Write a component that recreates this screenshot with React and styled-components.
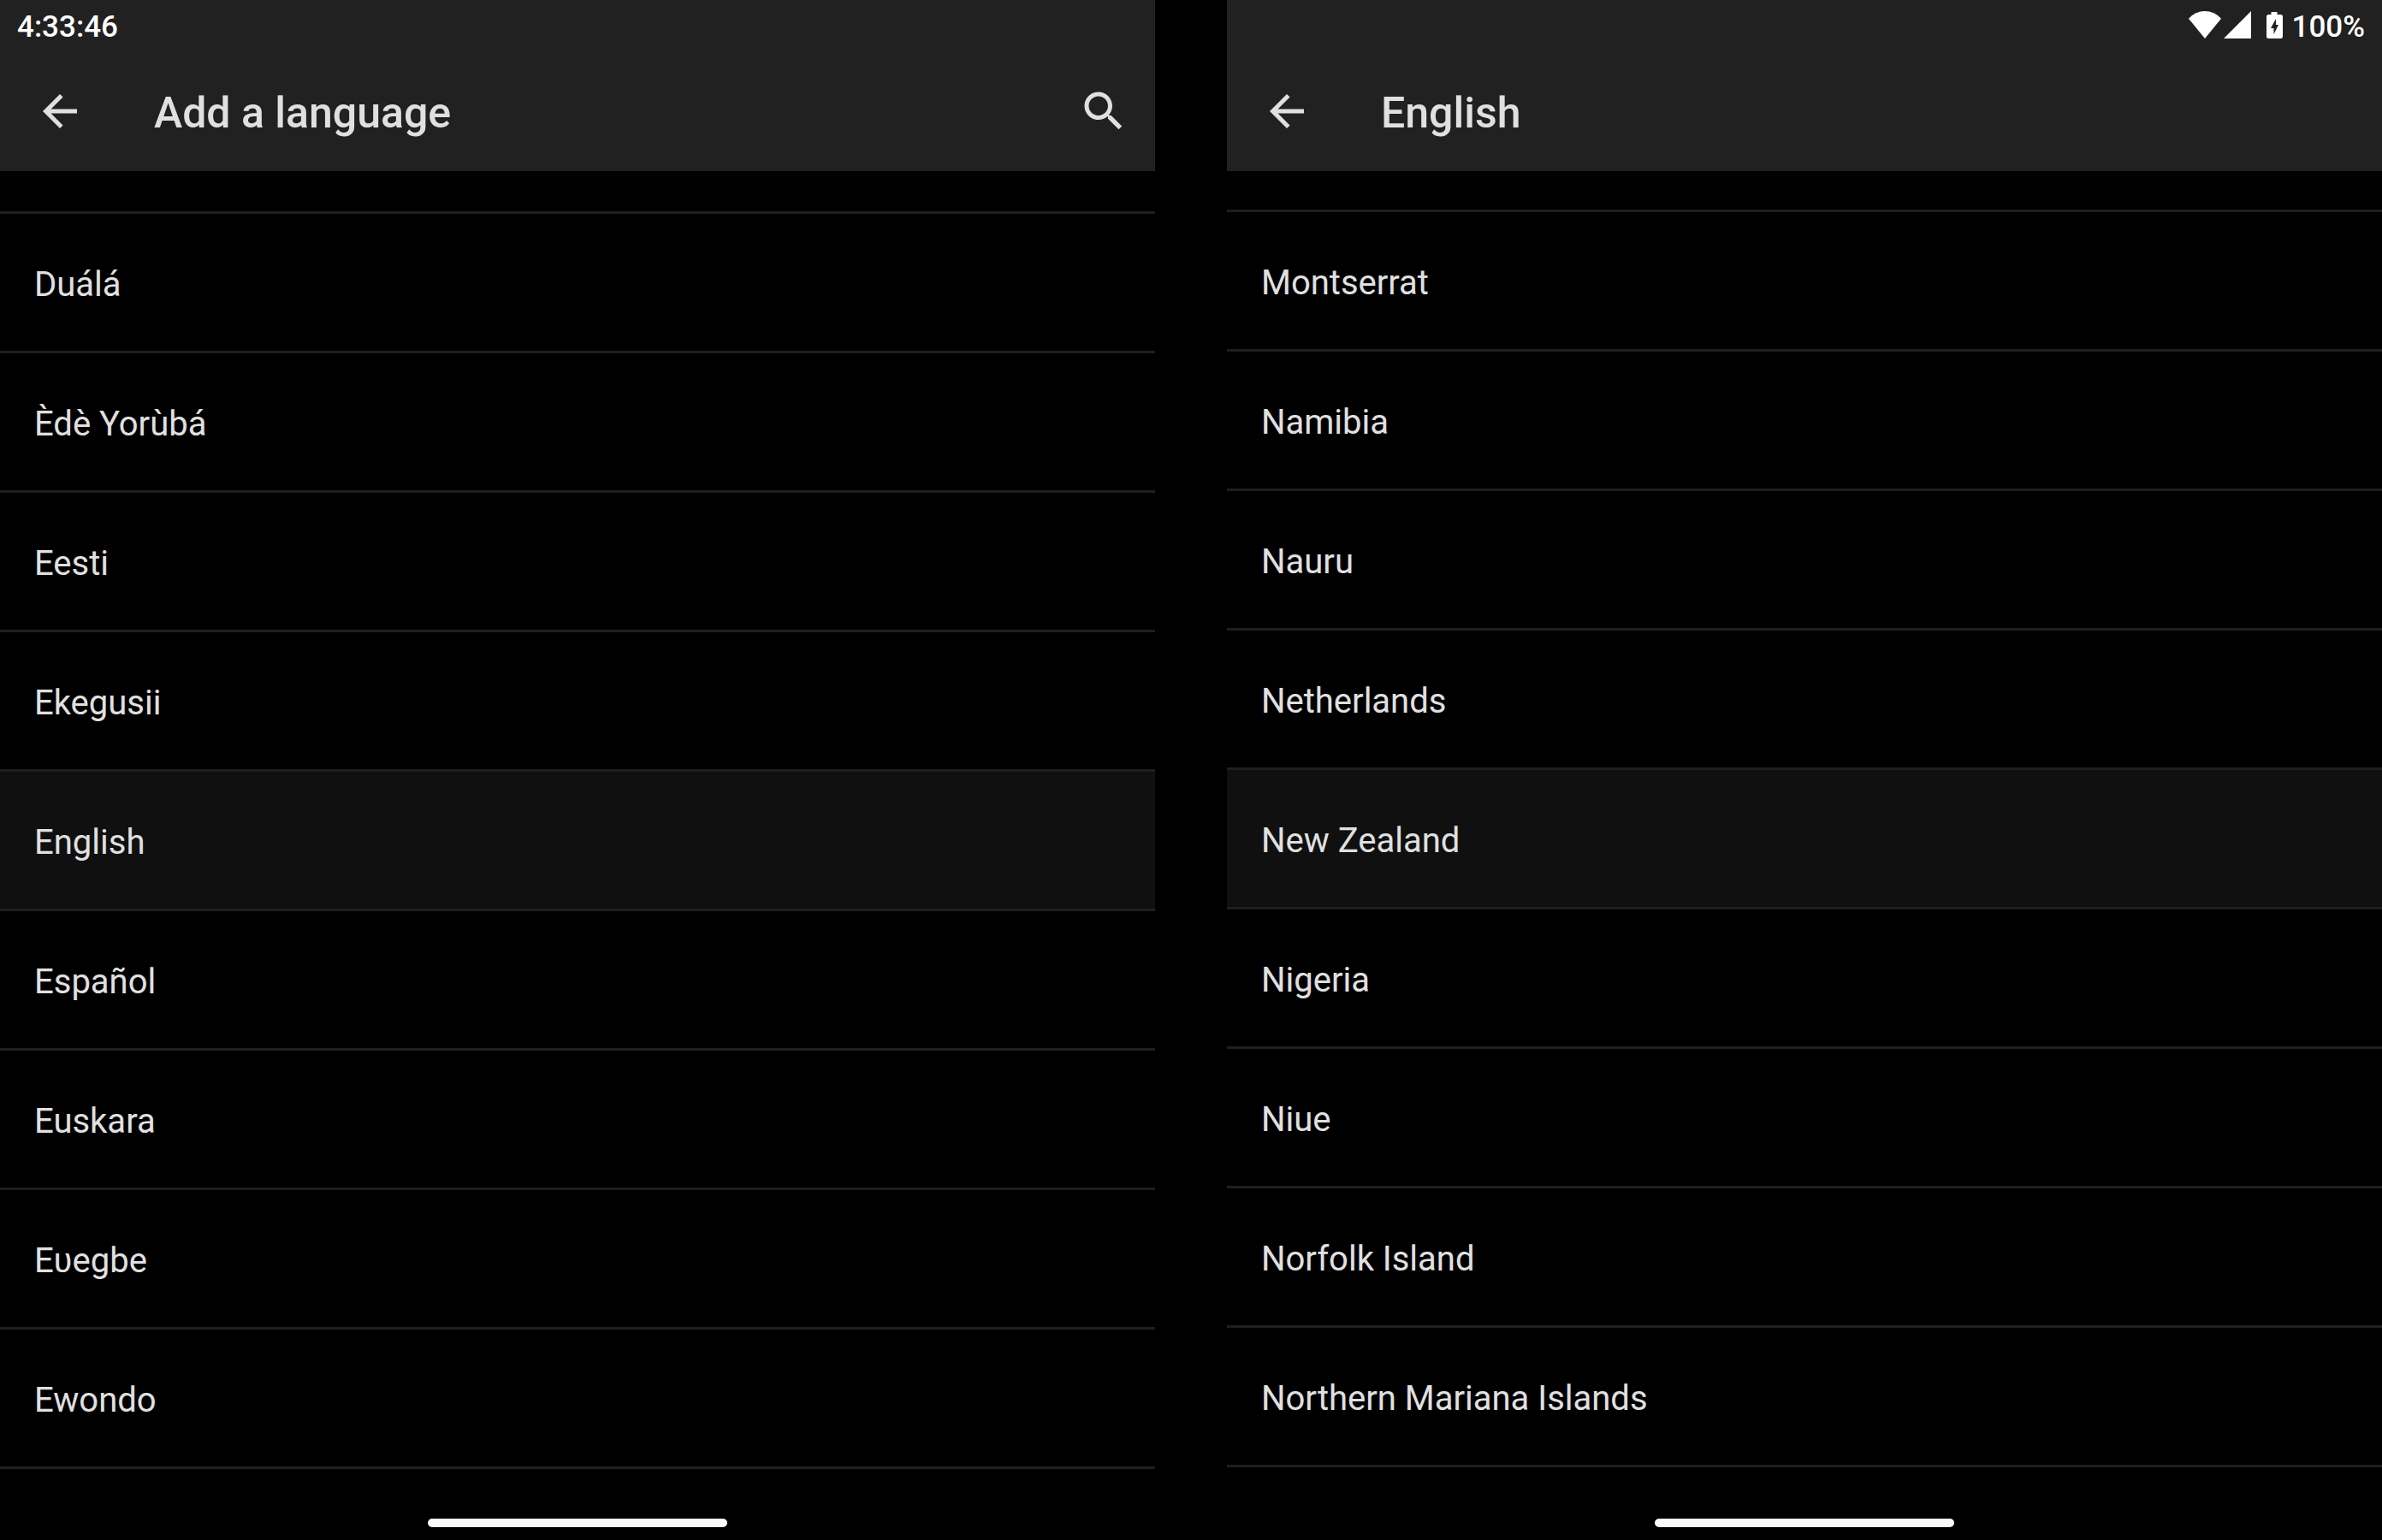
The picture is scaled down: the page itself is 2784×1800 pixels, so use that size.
import React from "react";
import styled, { createGlobalStyle } from "styled-components";

const languages = [
  "Duálá",
  "Èdè Yorùbá",
  "Eesti",
  "Ekegusii",
  "English",
  "Español",
  "Euskara",
  "Eʋegbe",
  "Ewondo",
];

const regions = [
  "Montserrat",
  "Namibia",
  "Nauru",
  "Netherlands",
  "New Zealand",
  "Nigeria",
  "Niue",
  "Norfolk Island",
  "Northern Mariana Islands",
];

function BackIcon() {
  return (
    <ToolbarIcon viewBox="0 0 24 24">
      <path d="M20 11H7.83l5.59-5.59L12 4l-8 8 8 8 1.41-1.41L7.83 13H20v-2z" />
    </ToolbarIcon>
  );
}

function SearchIcon() {
  return (
    <ToolbarIcon viewBox="0 0 24 24">
      <path d="M15.5 14h-.79l-.28-.27C15.41 12.59 16 11.11 16 9.5 16 5.91 13.09 3 9.5 3S3 5.91 3 9.5 5.91 16 9.5 16c1.61 0 3.09-.59 4.23-1.57l.27.28v.79l5 4.99L20.49 19l-4.99-5zm-6 0C7.01 14 5 11.99 5 9.5S7.01 5 9.5 5 14 7.01 14 9.5 11.99 14 9.5 14z" />
    </ToolbarIcon>
  );
}

// wifi, signal and charging battery
function StatusIcons() {
  return (
    <svg width="110" height="32" viewBox="0 0 110 32" fill="#fff">
      <path d="M0 8.700Q8 0 19 0t19 8.700L19 32z" />
      <path d="M73 0v32H41z" />
      <path
        fillRule="evenodd"
        d="M96.500 1h7v3h4a2.500 2.500 0 0 1 2.500 2.500v23a2.500 2.500 0 0 1-2.500 2.500h-14a2.500 2.500 0 0 1-2.500-2.500v-23a2.500 2.500 0 0 1 2.500-2.500h3zM102 9l-6 11h3.500v7l5.500-11h-3z"
      />
    </svg>
  );
}

function Screen({ title, items, selected, status, searchable, scrolled }) {
  return (
    <Panel>
      <Header>
        <StatusBar>{status}</StatusBar>
        <Toolbar>
          <IconButton aria-label="Navigate up">
            <BackIcon />
          </IconButton>
          <Title>{title}</Title>
          {searchable && (
            <IconButton aria-label="Search">
              <SearchIcon />
            </IconButton>
          )}
        </Toolbar>
      </Header>
      <List $scrolled={scrolled}>
        {items.map((item) => (
          <Item key={item}>
            <ItemButton $selected={item === selected}>{item}</ItemButton>
          </Item>
        ))}
      </List>
      <NavBar>
        <HomeHandle />
      </NavBar>
    </Panel>
  );
}

function App() {
  return (
    <>
      <GlobalStyle />
      <Screens>
        <Screen
          title="Add a language"
          items={languages}
          selected="English"
          searchable
          status={<time>4:33:46</time>}
        />
        <Screen
          title="English"
          items={regions}
          selected="New Zealand"
          scrolled
          status={
            <Indicators>
              <StatusIcons />
              <span>100%</span>
            </Indicators>
          }
        />
      </Screens>
    </>
  );
}

export default App;

const GlobalStyle = createGlobalStyle`
  * {
    box-sizing: border-box;
  }
  body {
    margin: 0;
    background: #000;
    color: #e0e0e0;
    font-family: Roboto, "Liberation Sans", sans-serif;
  }
`;
const Screens = styled.main`
  display: grid;
  grid-template-columns: 1fr 1fr;
  column-gap: 84px;
  min-height: 100vh;
`;
const Panel = styled.section`
  display: flex;
  flex-direction: column;
  min-width: 0;
`;
const Header = styled.header`
  background: #212121;
`;
const StatusBar = styled.div`
  display: flex;
  align-items: center;
  height: 60px;
  padding: 2px 20px 0;
  color: #fff;
  font-size: 35px;
  font-weight: 500;
`;
const Indicators = styled.div`
  display: flex;
  align-items: center;
  gap: 11px;
  margin-left: auto;
  svg {
    margin-bottom: 4px;
  }
`;
const Toolbar = styled.div`
  display: flex;
  align-items: center;
  height: 140px;
  padding: 0 30px 0 40px;
`;
const IconButton = styled.button`
  display: flex;
  padding: 0;
  border: none;
  background: none;
  color: inherit;
  cursor: pointer;
`;
const ToolbarIcon = styled.svg`
  width: 60px;
  height: 60px;
  fill: currentColor;
`;
const Title = styled.h1`
  flex: 1;
  margin: 0;
  padding: 4px 0 0 80px;
  font-size: 50px;
  font-weight: 500;
`;
const List = styled.ul`
  flex: 1;
  margin: 0;
  padding: ${(props) => (props.$scrolled ? "45px" : "47px")} 0 0;
  list-style: none;
`;
const Item = styled.li`
  border-top: 3px solid #1f1f1f;
  &:last-child {
    border-bottom: 3px solid #1f1f1f;
  }
`;
const ItemButton = styled.button`
  display: block;
  width: 100%;
  height: 160px;
  padding: 4px 40px 0;
  border: none;
  background: ${(props) => (props.$selected ? "#101010" : "transparent")};
  color: inherit;
  font-family: inherit;
  font-size: 40px;
  text-align: left;
  cursor: pointer;
`;
const NavBar = styled.footer`
  display: flex;
  justify-content: center;
  padding-bottom: 15px;
`;
const HomeHandle = styled.div`
  width: 350px;
  height: 10px;
  border-radius: 5px;
  background: #fafafa;
`;
